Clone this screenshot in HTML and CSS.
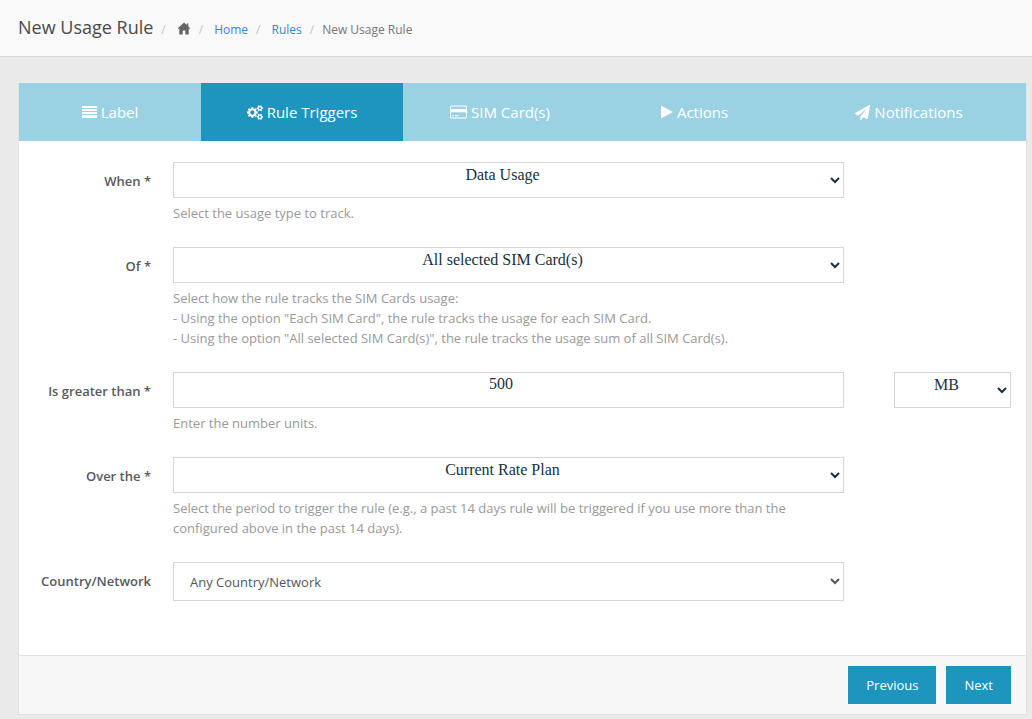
FILE: index.html
```html
<!DOCTYPE html>
<html lang="en">
<head>
<meta charset="utf-8">
<title>New Usage Rule</title>
<link rel="stylesheet" href="styles.css">
</head>
<body>
<header class="page-header">
  <h1 class="page-title">New Usage Rule</h1>
  <nav aria-label="Breadcrumb">
    <ol class="breadcrumb">
      <li><svg class="home-icon" viewBox="0 0 14 13" aria-hidden="true"><path d="M7 0.5 0.8 6.3 1.5 7.1 2.3 6.5V12.5H5.7V8.5H8.3V12.5H11.7V6.5L12.5 7.1 13.2 6.3 11.3 4.5V1.5H9.7V3Z"/></svg></li>
      <li><a href="#home">Home</a></li>
      <li><a href="#rules">Rules</a></li>
      <li class="current">New Usage Rule</li>
    </ol>
  </nav>
</header>
<main class="content">
  <form class="wizard">
    <nav class="tabs" aria-label="Steps">
      <a class="tab" href="#label"><svg class="icon" viewBox="0 0 15 14" aria-hidden="true"><path d="M0 1h15v2H0zM0 4h15v2H0zM0 7h15v2H0zM0 10h15v3H0z"/></svg>Label</a>
      <a class="tab active" href="#triggers" aria-current="step"><svg class="icon large" viewBox="0 0 1920 1792" aria-hidden="true"><path d="M896 896q0-106-75-181t-181-75-181 75-75 181 75 181 181 75 181-75 75-181zm768 512q0-52-38-90t-90-38-90 38-38 90q0 53 37.500 90.500t90.500 37.500 90.500-37.500 37.500-90.500zm0-1024q0-52-38-90t-90-38-90 38-38 90q0 53 37.500 90.500t90.500 37.500 90.500-37.500 37.500-90.500zm-384 421v185q0 10-7 19.500t-16 10.500l-155 24q-11 35-32 76 34 48 90 115 7 11 7 20 0 12-7 19-23 30-82.500 89.500t-78.500 59.500q-11 0-21-7l-115-90q-37 19-77 31-11 108-23 155-7 24-30 24h-186q-11 0-20-7.500t-10-17.500l-23-153q-34-10-75-31l-118 89q-7 7-20 7-11 0-21-8-144-133-144-160 0-9 7-19 10-14 41-53t47-61q-23-44-35-82l-152-24q-10-1-17-9.500t-7-19.500v-185q0-10 7-19.500t16-10.500l155-24q11-35 32-76-34-48-90-115-7-11-7-20 0-12 7-20 22-30 82-89t79-59q11 0 21 7l115 90q34-18 77-32 11-108 23-154 7-24 30-24h186q11 0 20 7.500t10 17.500l23 153q34 10 75 31l118-89q8-7 20-7 11 0 21 8 144 133 144 160 0 8-7 19-12 16-42 54t-45 60q23 48 34 82l152 23q10 2 17 10.500t7 19.500zm640 533v140q0 16-149 31-12 27-30 52 51 113 51 138 0 4-4 7-122 71-124 71-8 0-46-47t-52-68q-20 2-30 2t-30-2q-14 21-52 68t-46 47q-2 0-124-71-4-3-4-7 0-25 51-138-18-25-30-52-149-15-149-31v-140q0-16 149-31 13-29 30-52-51-113-51-138 0-4 4-7 4-2 35-20t59-34 30-16q8 0 46 46.500t52 67.500q20-2 30-2t30 2q51-71 92-112l6-2q4 0 124 70 4 3 4 7 0 25-51 138 17 23 30 52 149 15 149 31zm0-1024v140q0 16-149 31-12 27-30 52 51 113 51 138 0 4-4 7-122 71-124 71-8 0-46-47t-52-68q-20 2-30 2t-30-2q-14 21-52 68t-46 47q-2 0-124-71-4-3-4-7 0-25 51-138-18-25-30-52-149-15-149-31v-140q0-16 149-31 13-29 30-52-51-113-51-138 0-4 4-7 4-2 35-20t59-34 30-16q8 0 46 46.500t52 67.500q20-2 30-2t30 2q51-71 92-112l6-2q4 0 124 70 4 3 4 7 0 25-51 138 17 23 30 52 149 15 149 31z"/></svg>Rule Triggers</a>
      <a class="tab" href="#sims"><svg class="icon" viewBox="0 0 17 14" aria-hidden="true"><path fill-rule="evenodd" d="M1.500 0.500h14q1.500 0 1.500 1.500v10q0 1.500-1.500 1.500h-14q-1.500 0-1.500-1.500v-10q0-1.500 1.500-1.500zM1.500 1.500q-.5 0-.5.5v2h15v-2q0-.5-.5-.5zM1 7.200v4.800q0 .5.500.5h14q.5 0 .5-.5v-4.800zM2 10.300h2v1H2zM5 10.300h3.500v1H5z"/></svg>SIM Card(s)</a>
      <a class="tab" href="#actions"><svg class="icon" viewBox="0 0 12 14" aria-hidden="true"><path d="M0 .5 12 7 0 13.500z"/></svg>Actions</a>
      <a class="tab" href="#notifications"><svg class="icon large" viewBox="0 0 1792 1792" aria-hidden="true"><path d="M1764 11q33 24 27 64l-256 1536q-5 29-32 45-14 8-31 8-11 0-24-5l-453-185-242 295q-18 23-49 23-13 0-22-4-19-7-30.500-23.500t-11.500-36.500v-349l864-1059-1069 925-395-162q-37-14-40-55-2-40 32-59l1664-960q15-9 32-9 20 0 36 11z"/></svg>Notifications</a>
    </nav>
    <div class="fields">
      <div class="row">
        <label class="name" for="when">When *</label>
        <div>
          <select class="control centered" id="when"><option>Data Usage</option></select>
          <p class="help">Select the usage type to track.</p>
        </div>
      </div>
      <div class="row">
        <label class="name" for="of">Of *</label>
        <div>
          <select class="control centered" id="of"><option>All selected SIM Card(s)</option></select>
          <p class="help">Select how the rule tracks the SIM Cards usage:<br>- Using the option "Each SIM Card", the rule tracks the usage for each SIM Card.<br>- Using the option "All selected SIM Card(s)", the rule tracks the usage sum of all SIM Card(s).</p>
        </div>
      </div>
      <div class="row">
        <label class="name" for="amount">Is greater than *</label>
        <div>
          <input class="control centered amount" id="amount" type="text" value="500">
          <p class="help">Enter the number units.</p>
        </div>
        <div class="unit">
          <select class="control centered" aria-label="Unit"><option>MB</option></select>
        </div>
      </div>
      <div class="row">
        <label class="name" for="period">Over the *</label>
        <div>
          <select class="control centered" id="period"><option>Current Rate Plan</option></select>
          <p class="help">Select the period to trigger the rule (e.g., a past 14 days rule will be triggered if you use more than the configured above in the past 14 days).</p>
        </div>
      </div>
      <div class="row">
        <label class="name" for="country">Country/Network</label>
        <div>
          <select class="control plain" id="country"><option>Any Country/Network</option></select>
        </div>
      </div>
    </div>
    <footer class="actions">
      <button class="button" type="button">Previous</button>
      <button class="button" type="button">Next</button>
    </footer>
  </form>
</main>
</body>
</html>
```
FILE: styles.css
```css
* {
  box-sizing: border-box;
}

body {
  margin: 0;
  background: #eaeaea;
  color: #58595a;
  font: 13px/20px "Open Sans", sans-serif;
}

.page-header {
  display: flex;
  align-items: baseline;
  padding: 14px 18px 15px;
  background: #f9f9f9;
  border-bottom: 1px solid #d9d9d9;
}

.page-title {
  margin: 0;
  color: #4a4a4a;
  font-size: 18px;
  font-weight: 400;
  line-height: 27px;
}

.breadcrumb {
  display: flex;
  margin: 0;
  padding: 0;
  list-style: none;
  font-size: 12px;
  line-height: 18px;
}

.breadcrumb li::before {
  content: "/";
  padding: 0 11px 0 8px;
  color: #c4c4c4;
}

.breadcrumb .current {
  color: #777;
}

.breadcrumb .current::before {
  padding-right: 8px;
}

.breadcrumb a {
  color: #3f7fe0;
  text-decoration: none;
}

.home-icon {
  width: 14px;
  height: 13px;
  fill: #666;
  vertical-align: -1px;
}

.content {
  padding: 26px 5px 4px 18px;
}

.wizard {
  background: #fff;
  border: 1px solid #e2e2e2;
  border-top: 0;
}

.tabs {
  display: grid;
  grid-template-columns: 182fr 202fr 194fr 195fr 234fr;
  background: #9bd2e3;
}

.tab {
  display: flex;
  align-items: center;
  justify-content: center;
  gap: 4px;
  padding: 18px 0;
  color: #fff;
  font-size: 15px;
  line-height: 22px;
  text-decoration: none;
}

.tab.active {
  background: #1e95bf;
}

.icon {
  height: 14px;
  fill: #fff;
}

.icon.large {
  height: 15px;
}

.fields {
  padding: 21px 15px 54px;
}

.row {
  display: grid;
  grid-template-columns: 117px 1fr 145px;
  column-gap: 22px;
  padding-bottom: 24px;
}

.row:last-child {
  padding-bottom: 0;
}

.name {
  padding-top: 9px;
  font-weight: 600;
  text-align: right;
}

.control {
  display: block;
  width: 100%;
  height: 36px;
  background: #fff;
  border: 1px solid #d5d6d7;
  border-radius: 0;
}

.centered {
  padding: 0 0 12px;
  color: #17303d;
  font: 16px "Liberation Serif", serif;
  text-align: center;
}

.amount {
  padding-right: 15px;
}

.plain {
  height: 39px;
  padding: 0 12px;
  color: #555;
  font: 13px "Open Sans", sans-serif;
}

.help {
  margin: 5px 0 0;
  color: #999;
}

.unit {
  margin-left: 28px;
}

.actions {
  display: flex;
  justify-content: flex-end;
  gap: 10px;
  padding: 10px 15px;
  background: #f7f7f7;
  border-top: 1px solid #e2e2e2;
}

.button {
  padding: 0 18px;
  background: #1e95bf;
  border: 0;
  color: #fff;
  font: 13px/38px "Open Sans", sans-serif;
}
```
